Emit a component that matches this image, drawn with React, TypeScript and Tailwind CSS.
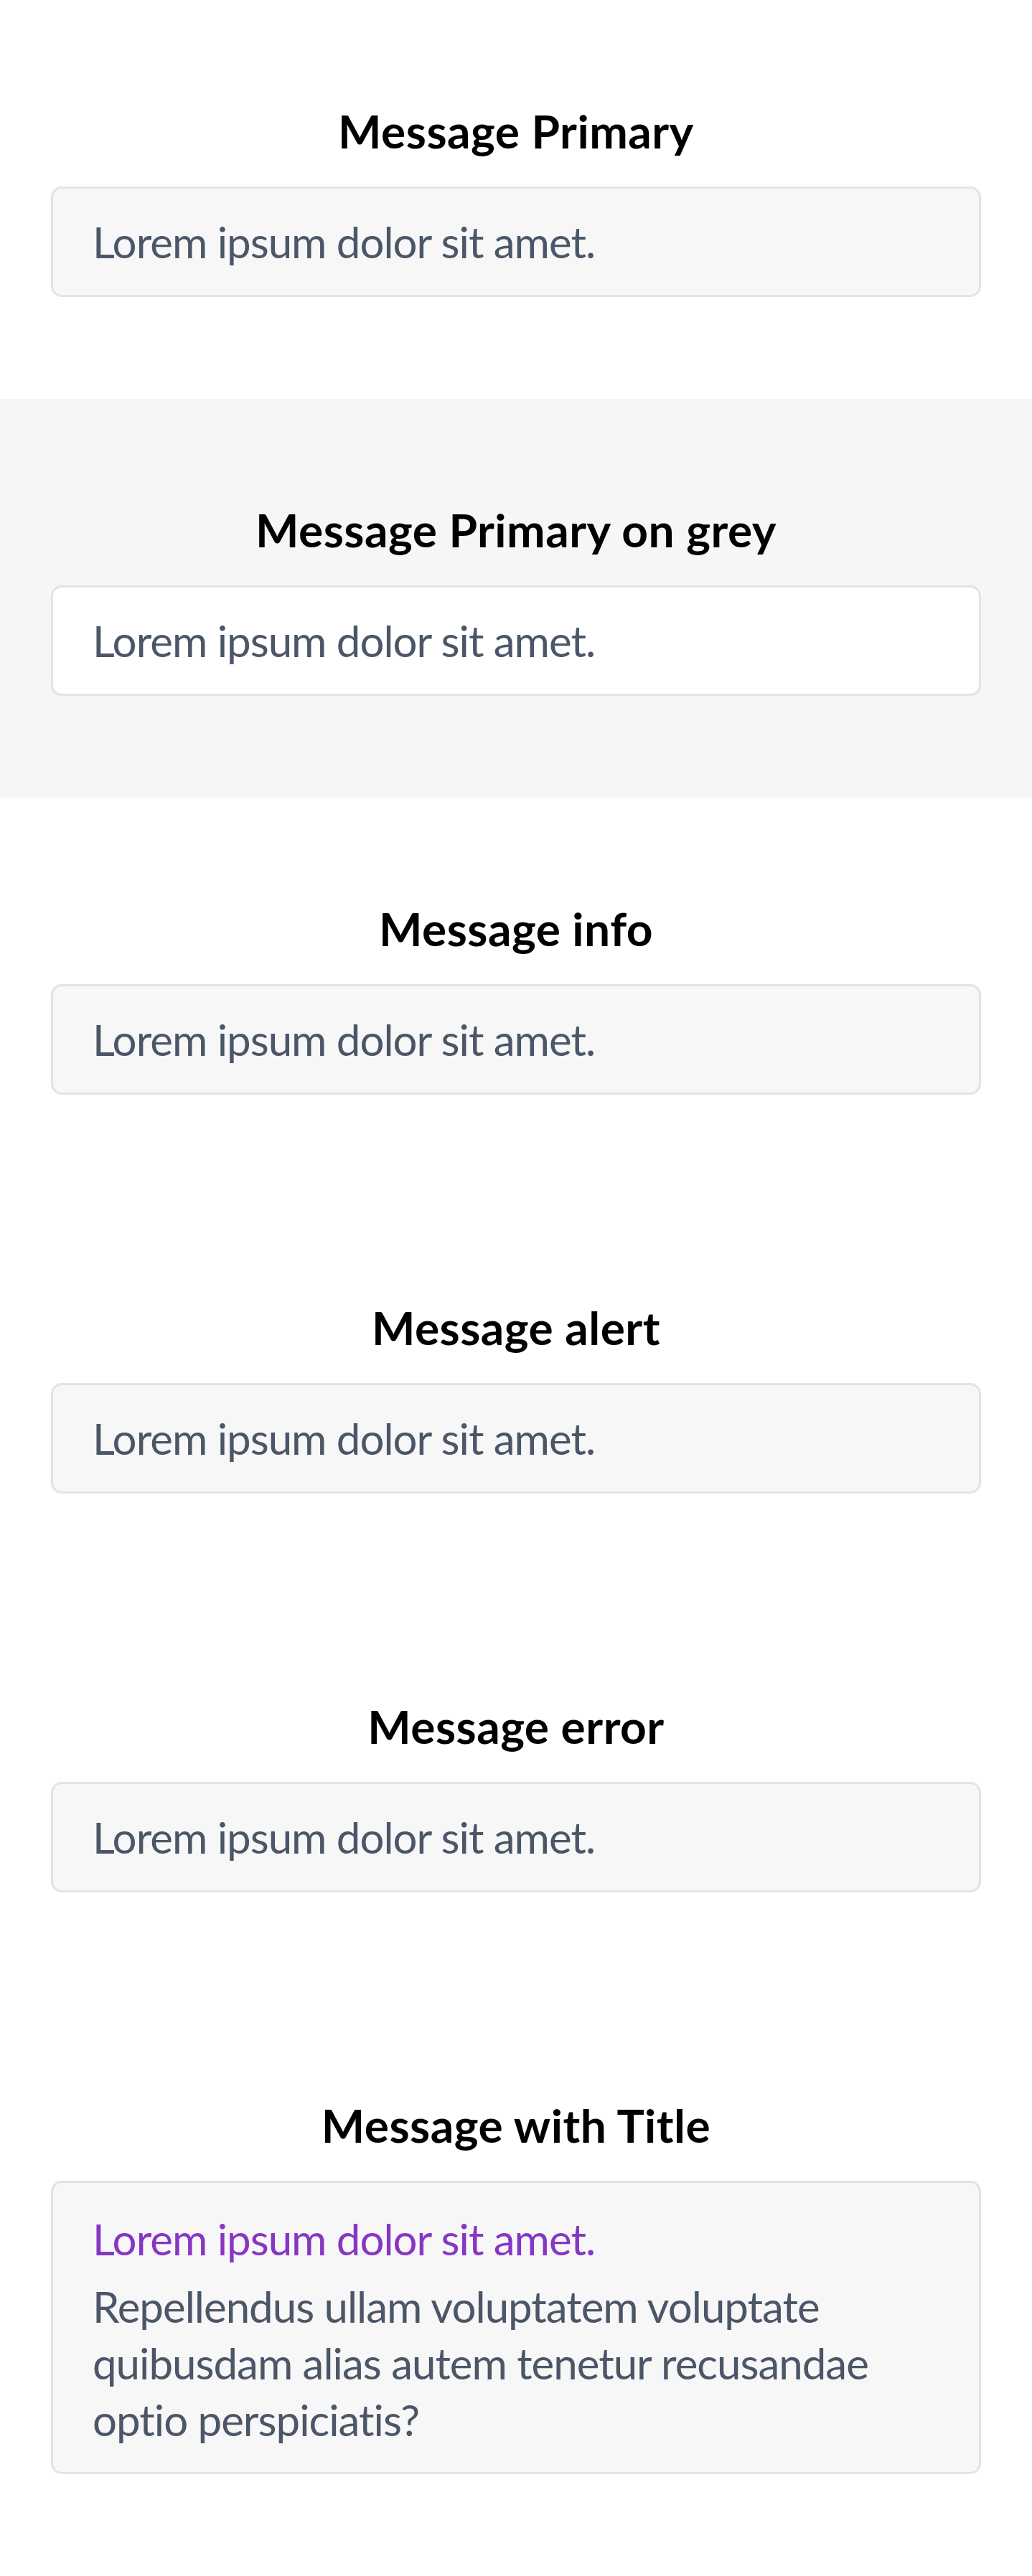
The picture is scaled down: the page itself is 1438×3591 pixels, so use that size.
import React from "react";

const sections = [
  { title: "Message Primary", grey: false },
  { title: "Message Primary on grey", grey: true },
  { title: "Message info", grey: false },
  { title: "Message alert", grey: false },
  { title: "Message error", grey: false },
];

function Heading({ children }: { children: React.ReactNode }) {
  return (
    <h2 className="text-center text-[64px] leading-[80px] font-bold tracking-[0.5px] text-black mb-[37px]">
      {children}
    </h2>
  );
}

export default function App() {
  return (
    <div className="w-full bg-white" style={{ fontFamily: "Lato, 'Noto Sans', sans-serif" }}>
      {sections.map((s) => (
        <section
          key={s.title}
          className={`px-[71px] pt-[143px] pb-[142px] ${s.grey ? "bg-[#f6f6f6]" : "bg-white"}`}
        >
          <Heading>{s.title}</Heading>
          <div
            className={`rounded-[15px] border-[3px] border-[#e3e3e3] px-[55px] py-[30px] ${
              s.grey ? "bg-white" : "bg-[#f7f7f7]"
            }`}
          >
            <p className="text-[60px] leading-[88px] tracking-[-1px] text-[#4b5668]">Lorem ipsum dolor sit amet.</p>
          </div>
        </section>
      ))}
      <section className="px-[71px] pt-[143px] pb-[142px] bg-white">
        <Heading>Message with Title</Heading>
        <div className="rounded-[15px] border-[3px] border-[#e3e3e3] bg-[#f7f7f7] px-[55px] pt-[30px] pb-[33px]">
          <p className="text-[60px] leading-[96px] tracking-[-1px] text-[#8736c4] mb-[7px]">Lorem ipsum dolor sit amet.</p>
          <p className="text-[60px] leading-[79px] tracking-[-1px] text-[#4b5668]">
            Repellendus ullam voluptatem voluptate quibusdam alias autem tenetur recusandae optio perspiciatis?
          </p>
        </div>
      </section>
    </div>
  );
}
